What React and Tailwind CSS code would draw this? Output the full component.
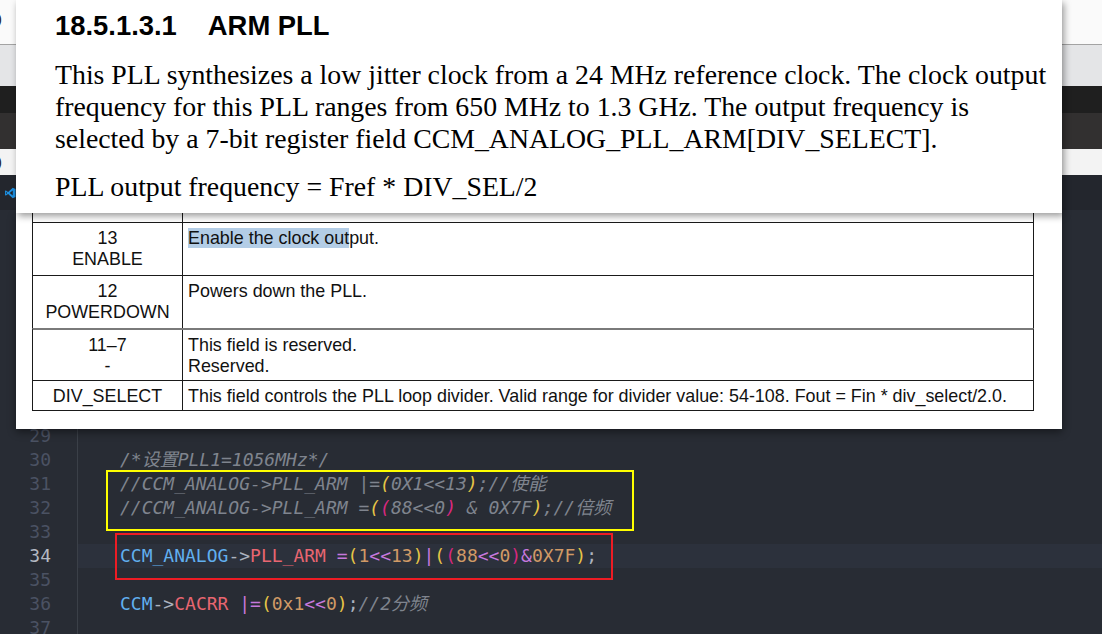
import React from 'react';

const mono = "font-['DejaVu_Sans_Mono','Noto_Sans_CJK_SC',monospace]";

const C = {
  cm: 'text-[#7f848e] italic',
  gold: 'text-[#e6c547]',
  pink: 'text-[#d8287f]',
  blue: 'text-[#61afef]',
  red: 'text-[#e86671]',
  op: 'text-[#abb2bf]',
  kw: 'text-[#c678dd]',
  num: 'text-[#d19a66]',
};

const lines = [
  { n: 29, parts: [] },
  { n: 30, parts: [['/*设置PLL1=1056MHz*/', C.cm]] },
  {
    n: 31,
    parts: [
      ['//CCM_ANALOG->PLL_ARM |=', C.cm],
      ['(', C.gold + ' italic'],
      ['0X1<<13', C.cm],
      [')', C.gold + ' italic'],
      [';//使能', C.cm],
    ],
  },
  {
    n: 32,
    parts: [
      ['//CCM_ANALOG->PLL_ARM =', C.cm],
      ['(', C.gold + ' italic'],
      ['(', C.pink + ' italic'],
      ['88<<0', C.cm],
      [')', C.pink + ' italic'],
      [' & 0X7F', C.cm],
      [')', C.gold + ' italic'],
      [';//倍频', C.cm],
    ],
  },
  { n: 33, parts: [] },
  {
    n: 34,
    current: true,
    parts: [
      ['CCM_ANALOG', C.blue],
      ['->', C.op],
      ['PLL_ARM', C.red],
      [' ', C.op],
      ['=', C.kw],
      ['(', C.gold],
      ['1', C.num],
      ['<<', C.kw],
      ['13', C.num],
      [')', C.gold],
      ['|', C.kw],
      ['(', C.gold],
      ['(', C.pink],
      ['88', C.num],
      ['<<', C.kw],
      ['0', C.num],
      [')', C.pink],
      ['&', C.kw],
      ['0X7F', C.num],
      [')', C.gold],
      [';', C.op],
    ],
  },
  { n: 35, parts: [] },
  {
    n: 36,
    parts: [
      ['CCM', C.blue],
      ['->', C.op],
      ['CACRR', C.red],
      [' ', C.op],
      ['|=', C.kw],
      ['(', C.gold],
      ['0x1', C.num],
      ['<<', C.kw],
      ['0', C.num],
      [')', C.gold],
      [';', C.op],
      ['//2分频', C.cm],
    ],
  },
  { n: 37, parts: [] },
];

const rows = [
  { h: 'h-[9px]', bits: [], desc: null },
  { h: 'h-[53px]', bits: ['13', 'ENABLE'], desc: 'enable' },
  { h: 'h-[53px]', bits: ['12', 'POWERDOWN'], desc: ['Powers down the PLL.'] },
  { h: 'h-[52px]', bits: ['11–7', '-'], desc: ['This field is reserved.', 'Reserved.'] },
  {
    h: 'h-[31px]',
    bits: ['DIV_SELECT'],
    desc: ['This field controls the PLL loop divider. Valid range for divider value: 54-108. Fout = Fin * div_select/2.0.'],
  },
];

function VsLogo() {
  return (
    <svg width="12" height="12" viewBox="0 0 24 24" className="ml-[4px]">
      <path d="M17.5 1.5 23 4.2v15.6l-5.5 2.7-9.3-8.6-4.3 3.3L2 16.3V7.7l1.9-.9 4.3 3.3z" fill="#1d8fe0" />
      <path d="M17.5 7.2 11.2 12l6.3 4.8z" fill="#23262d" />
      <path d="M3.9 9.3 6.2 12l-2.3 2.7z" fill="#23262d" />
    </svg>
  );
}

export default function App() {
  return (
    <div className="relative h-[634px] w-[1102px] overflow-hidden bg-[#282c34]">
      {/* window chrome behind the clippings */}
      <div className="flex flex-col">
        <div className="flex h-[45px] items-center border-b border-[#a3a3a3] bg-[#fafafa] font-['Liberation_Sans',sans-serif] text-[15px] text-[#222]">
          <span className="ml-[-3px] -mt-[6px]">)</span>
        </div>
        <div className="h-[41px] bg-[#e4e5e7]" />
        <div className="h-[27px] bg-[#1f1f1f]" />
        <div className="h-[36px] bg-[#323030]" />
        <div className="flex h-[26px] items-center bg-[#f3f3f3] font-['Liberation_Sans',sans-serif] text-[15px] text-[#222]">
          <span className="ml-[-3px]">)</span>
        </div>
        <div className="flex h-[35px] items-center bg-[#23262d]">
          <VsLogo />
        </div>

        {/* editor */}
        <div className={`${mono} pt-[214px] text-[18px] leading-[24px]`}>
          {lines.map((line) => (
            <div key={line.n} className="flex h-[24px]">
              <div
                className={`w-[51px] shrink-0 text-right ${
                  line.current ? 'text-[#b4b9c2]' : 'text-[#4b5263]'
                }`}
              >
                {line.n}
              </div>
              <div
                className={`ml-[26px] flex-1 whitespace-pre border-l border-[#3b4048] pl-[42px] ${
                  line.current ? 'bg-[#2c313c]' : ''
                }`}
              >
                {line.parts.map(([t, cls], i) => (
                  <span key={i} className={cls}>
                    {t}
                  </span>
                ))}
              </div>
            </div>
          ))}
        </div>
      </div>

      {/* annotation boxes */}
      <div className="absolute left-[106px] top-[470px] h-[61px] w-[528px] border-2 border-[#ffff00]" />
      <div className="absolute left-[115px] top-[533px] h-[47px] w-[498px] border-2 border-[#ed1c24]" />

      {/* table clipping */}
      <div className="absolute left-[16px] top-[213px] z-10 h-[216px] w-[1046px] bg-white shadow-[0_3px_8px_rgba(0,0,0,0.45)]">
        <div className="ml-[16px] w-[1002px] font-['Liberation_Sans',Arial,sans-serif] text-[17.9px] leading-[21px] text-[#111]">
          {rows.map((r, i) => (
            <div
              key={i}
              className={`grid grid-cols-[150px_852px] ${r.h} border-x border-[#1a1a1a] ${
                i === 0 ? '' : i === 3 ? 'border-t-2 border-t-[#7a7a7a]' : 'border-t border-t-[#1a1a1a]'
              } ${i === rows.length - 1 ? 'border-b border-b-[#1a1a1a]' : ''}`}
            >
              <div className="flex flex-col items-center border-r border-[#1a1a1a] pt-[5px]">
                {r.bits.map((b) => (
                  <span key={b}>{b}</span>
                ))}
              </div>
              <div className="flex flex-col pl-[5px] pt-[5px]">
                {r.desc === 'enable' ? (
                  <span>
                    <span className="bg-[#b3cde6]">Enable the clock out</span>put.
                  </span>
                ) : (
                  r.desc && r.desc.map((d) => <span key={d} className="whitespace-nowrap">{d}</span>)
                )}
              </div>
            </div>
          ))}
        </div>
      </div>

      {/* heading clipping */}
      <div className="absolute left-0 top-0 z-20 h-[213px] w-[1062px] pl-[16px]">
        <div className="h-full w-full bg-white pl-[39px] pt-[10px] shadow-[2px_3px_7px_rgba(0,0,0,0.4)]">
          <h1 className="font-['Liberation_Sans',Arial,sans-serif] text-[27.4px] font-bold leading-[32px] text-black">
            18.5.1.3.1<span className="ml-[31px]">ARM PLL</span>
          </h1>
          <p className="mt-[17px] whitespace-nowrap font-['Liberation_Serif','Times_New_Roman',serif] text-[27.8px] leading-[32px] text-black">
            This PLL synthesizes a low jitter clock from a 24 MHz reference clock. The clock output
            <br />
            frequency for this PLL ranges from 650 MHz to 1.3 GHz. The output frequency is
            <br />
            selected by a 7-bit register field CCM_ANALOG_PLL_ARM[DIV_SELECT].
          </p>
          <p className="mt-[16px] font-['Liberation_Serif','Times_New_Roman',serif] text-[27.8px] leading-[32px] text-black">
            PLL output frequency = Fref * DIV_SEL/2
          </p>
        </div>
      </div>
    </div>
  );
}
